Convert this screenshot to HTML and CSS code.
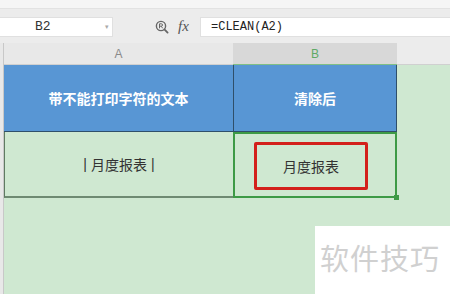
FILE: index.html
```html
<!DOCTYPE html>
<html lang="zh-CN">
<head>
    <meta charset="UTF-8">
    <title>CLEAN</title>
    <link rel="stylesheet" href="styles.css">
</head>
<body>
    <div class="top-strip"></div>

    <div class="toolbar">
        <div class="name-box">
            <span class="cell-ref">B2</span>
            <span class="drop">&#9662;</span>
        </div>
        <div class="tools">
            <svg class="zoom-icon" width="14" height="14" viewBox="0 0 14 14">
                <circle cx="6" cy="6" r="4.6" fill="none" stroke="#666" stroke-width="1.4"/>
                <path d="M4.5 8.3V3.8h1.8a1.2 1.2 0 0 1 0 2.4H4.5M6.2 6.2l1.5 2.1" fill="none" stroke="#666" stroke-width="1"/>
                <path d="M9.4 9.4l3.2 3.2" stroke="#666" stroke-width="1.8" stroke-linecap="round"/>
            </svg>
            <span class="fx">fx</span>
        </div>
        <div class="formula">=CLEAN(A2)</div>
    </div>

    <div class="sheet">
        <div class="corner"></div>
        <div class="col-head col-a">A</div>
        <div class="col-head col-b">B</div>
        <div class="col-head col-rest"></div>

        <div class="row-head row1"></div>
        <div class="cell title">带不能打印字符的文本</div>
        <div class="cell title title-b">清除后</div>
        <div class="cell empty"></div>

        <div class="row-head row2"></div>
        <div class="cell data"><span class="bar">|</span>月度报表<span class="bar">|</span></div>
        <div class="cell data selected">
            <div class="mark">月度报表</div>
            <span class="handle"></span>
        </div>
        <div class="cell empty"></div>

        <div class="row-head rest"></div>
        <div class="fill"></div>
    </div>

    <div class="watermark">软件技巧</div>
</body>
</html>
```

FILE: styles.css
```css
:root {
    --green-bg: #cfe8d1;
    --blue: #5896d4;
    --head-gray: #e8e8e8;
    --line: #5f7a62;
    --select: #3e9a46;
    --cjk: "Noto Sans CJK SC", "Noto Sans", sans-serif;
}

body {
    margin: 0;
    width: 450px;
    height: 294px;
    overflow: hidden;
    position: relative;
    background: var(--green-bg);
    font-family: var(--cjk);
}

.top-strip {
    height: 8px;
    background: #f5f5f5;
    border-bottom: 1px solid #e2e2e2;
}

.toolbar {
    height: 34px;
    background: #ececec;
    display: flex;
    align-items: center;
    padding-top: 1px;
    box-sizing: border-box;
}

.name-box {
    width: 113px;
    height: 20px;
    background: #fff;
    border: 1px solid #e0e0e0;
    border-left: none;
    box-sizing: border-box;
    display: flex;
    align-items: center;
    position: relative;
}

.cell-ref {
    font-family: "Liberation Mono", monospace;
    font-size: 13px;
    color: #333;
    margin-left: 35px;
}

.drop {
    position: absolute;
    right: 3px;
    top: 3px;
    font-size: 7px;
    color: #aaa;
}

.tools {
    width: 87px;
    display: flex;
    align-items: center;
    padding-left: 42px;
    box-sizing: border-box;
    gap: 9px;
}

.fx {
    font-family: "Liberation Serif", serif;
    font-style: italic;
    font-size: 15px;
    color: #555;
}

.formula {
    flex: 1;
    height: 20px;
    background: #fff;
    border: 1px solid #e0e0e0;
    border-right: none;
    box-sizing: border-box;
    padding-left: 10px;
    font-family: "Liberation Mono", monospace;
    font-size: 12px;
    line-height: 18px;
    color: #222;
}

.sheet {
    display: grid;
    grid-template-columns: 4px 229px 164px 1fr;
    grid-template-rows: 22px 67px 66px 1fr;
    height: 251px;
}

.corner,
.row-head {
    background: var(--head-gray);
    border-right: 1px solid #c8c8c8;
}

.col-head {
    background: var(--head-gray);
    border-bottom: 1px solid #d0d0d0;
    font-family: "Liberation Sans", sans-serif;
    font-size: 12px;
    color: #8a8a8a;
    display: flex;
    align-items: center;
    justify-content: center;
}

.col-b {
    background: #d8d8d8;
    color: #5faa66;
    border-bottom: 1px solid #7fbf86;
}

.col-rest {
    background: #ececec;
}

.cell {
    display: flex;
    align-items: center;
    justify-content: center;
    font-size: 14px;
    box-sizing: border-box;
}

.title {
    background: var(--blue);
    color: #fff;
    font-weight: bold;
    border-bottom: 1px solid #2f4f6a;
}

.title-b {
    border-left: 1px solid #2f4f6a;
    border-right: 1px solid #2f4f6a;
}

.data {
    color: #333;
    border-left: 1px solid var(--line);
    border-bottom: 2px solid #6f8a72;
}

.bar {
    font-family: "Liberation Sans", sans-serif;
    color: #333;
    margin: 0 4px;
}

.selected {
    border: 2px solid var(--select);
    position: relative;
}

.mark {
    width: 114px;
    height: 48px;
    border: 3px solid #d3201b;
    border-radius: 2px;
    box-sizing: border-box;
    display: flex;
    align-items: center;
    justify-content: center;
    margin-top: 2px;
    margin-right: 8px;
}

.handle {
    position: absolute;
    right: -4px;
    bottom: -4px;
    width: 5px;
    height: 5px;
    background: var(--select);
}

.empty,
.fill {
    background: var(--green-bg);
}

.fill {
    grid-column: 2 / 5;
}

.watermark {
    position: absolute;
    left: 315px;
    top: 226px;
    width: 135px;
    height: 68px;
    background: #fff;
    color: #d0d0d0;
    font-size: 29px;
    letter-spacing: 1px;
    box-sizing: border-box;
    padding: 13px 0 0 5px;
    line-height: 36px;
}
```
